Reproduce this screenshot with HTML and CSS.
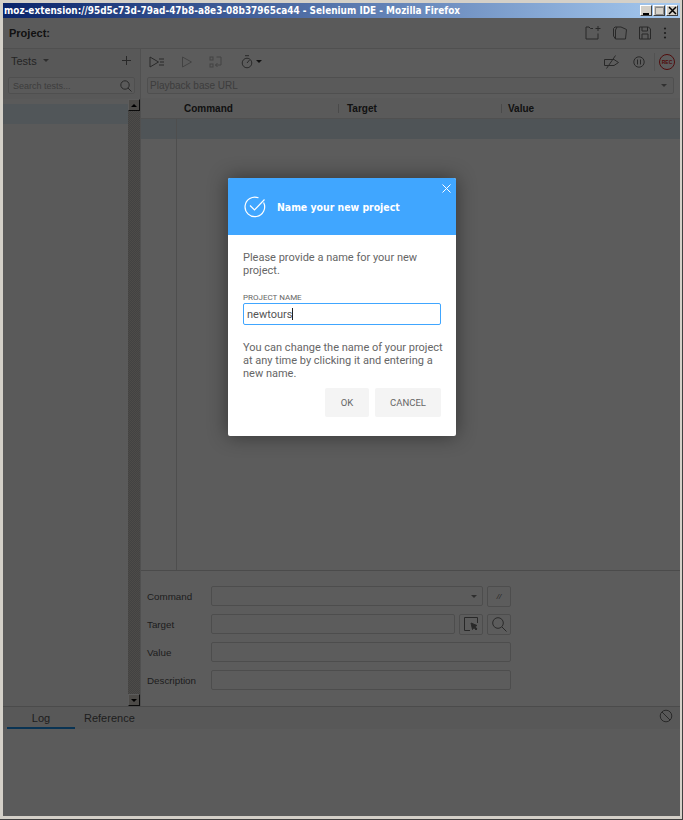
FILE: index.html
```html
<!DOCTYPE html>
<html lang="en">
<head>
<meta charset="utf-8">
<title>Selenium IDE</title>
<link rel="stylesheet" href="styles.css">
</head>
<body>
<div class="window">
  <div class="titlebar">
    <span class="title-text">moz-extension://95d5c73d-79ad-47b8-a8e3-08b37965ca44 - Selenium IDE - Mozilla Firefox</span>
    <div class="win-btns">
      <span class="win-btn"><svg width="9" height="9" viewBox="0 0 9 9"><rect x="1" y="7" width="6" height="2" fill="#000"/></svg></span>
      <span class="win-btn"><svg width="9" height="9" viewBox="0 0 9 9"><path d="M0.5 1.5h8v7h-8z" fill="none" stroke="#8a8a8a"/><path d="M0 1h9" stroke="#8a8a8a"/></svg></span>
      <span class="win-btn"><svg width="9" height="9" viewBox="0 0 9 9"><path d="M1 1l7 7M8 1l-7 7" stroke="#000" stroke-width="1.5"/></svg></span>
    </div>
  </div>
  <div class="app">
    <header class="project-bar">
      <span class="project-label">Project:</span>
      <div class="project-icons">
        <svg class="icon" width="16" height="14" viewBox="0 0 16 14"><path d="M8 2.500H5.500L4 1H1V13H13V7.500"/><path d="M13 0V5M10.500 2.500H15.500"/></svg>
        <svg class="icon" width="14" height="14" viewBox="0 0 14 14"><path d="M0.500 2.500L2 1H8L13.500 3.500L12.500 13H2.500L0.500 10z"/><path d="M4 1L2.500 4V13"/></svg>
        <svg class="icon" width="12" height="14" viewBox="0 0 12 14"><path d="M0.500 1H9.500L11.500 3V13H0.500z"/><path d="M3 1V5H8.500V1M3 13V8H9V13"/></svg>
        <svg class="icon-solid" width="4" height="14" viewBox="0 0 4 14"><circle cx="2" cy="2.500" r="1.100"/><circle cx="2" cy="7" r="1.100"/><circle cx="2" cy="11.500" r="1.100"/></svg>
      </div>
    </header>
    <div class="workspace">
      <aside class="sidebar">
        <div class="tests-head">
          <span class="tests-title">Tests</span>
          <span class="caret caret-soft"></span>
          <svg class="plus icon" width="11" height="11" viewBox="0 0 11 11"><path d="M5.500 1V10M1 5.500H10"/></svg>
        </div>
        <div class="search-box">
          <span class="search-ph">Search tests...</span>
          <svg class="icon" width="12" height="12" viewBox="0 0 12 12"><circle cx="5" cy="5" r="4.200"/><path d="M8 8l3.500 3.500"/></svg>
        </div>
        <div class="tests-list">
          <div class="tests-col">
            <div class="test-selected"></div>
          </div>
          <div class="scrollbar">
            <span class="sb-btn"><span class="sb-arrow-up"></span></span>
            <span class="sb-track"></span>
            <span class="sb-btn"><span class="sb-arrow-down"></span></span>
          </div>
        </div>
      </aside>
      <main class="editor">
        <div class="toolbar">
          <svg class="icon" width="16" height="12" viewBox="0 0 16 12"><path d="M1 1L9.500 6L1 11z"/><path d="M10 3H15M11 6H15M10 9H15"/></svg>
          <svg class="icon dim" width="12" height="12" viewBox="0 0 12 12"><path d="M1.500 1L10.500 6L1.500 11z"/></svg>
          <svg class="icon dim" width="13" height="12" viewBox="0 0 13 12"><rect x="1" y="1" width="3" height="3"/><rect x="1" y="8" width="3" height="3"/><path d="M7.500 1H12V9H6.500M8.500 7L6.500 9L8.500 11"/></svg>
          <span class="timer">
            <svg class="icon" width="12" height="14" viewBox="0 0 12 14"><circle cx="6" cy="8" r="4.800"/><path d="M4 0.700H8M6 8L8.500 5"/></svg>
            <span class="caret"></span>
          </span>
          <div class="toolbar-right">
            <svg class="icon" width="15" height="14" viewBox="0 0 15 14"><path d="M0.500 4.500H10L14.500 7.500L10 10.500H0.500z"/><path d="M2.500 13.500L11.500 0.500"/></svg>
            <svg class="icon" width="12" height="12" viewBox="0 0 12 12"><circle cx="6" cy="6" r="5.200"/><path d="M4.500 3.500V8.500M7.500 3.500V8.500"/></svg>
            <span class="tb-divider"></span>
            <span class="rec">REC</span>
          </div>
        </div>
        <div class="url-row">
          <div class="url-box">
            <span class="url-ph">Playback base URL</span>
            <span class="caret"></span>
          </div>
        </div>
        <div class="table-head">
          <span class="th th-cmd">Command</span>
          <span class="th th-target">Target</span>
          <span class="th th-value">Value</span>
        </div>
        <div class="table-body">
          <div class="row-selected"></div>
          <div class="gutter-line"></div>
        </div>
        <form class="command-form">
          <div class="form-row">
            <label class="form-label">Command</label>
            <div class="form-input form-select"><span class="caret caret-soft"></span></div>
            <span class="form-btn"><i class="comment">//</i></span>
          </div>
          <div class="form-row">
            <label class="form-label">Target</label>
            <div class="form-input"></div>
            <span class="form-btn"><svg class="icon" width="14" height="14" viewBox="0 0 14 14"><path d="M6 13.500H0.500V0.500H13.500V6"/><path class="fill" d="M7 6L13 8.500L11 9.500L13 12L12 13L10 10.500L8.500 12.500z"/></svg></span>
            <span class="form-btn"><svg class="icon" width="15" height="15" viewBox="0 0 15 15"><circle cx="6" cy="6" r="5.300"/><path d="M10 10L14.500 14.500"/></svg></span>
          </div>
          <div class="form-row">
            <label class="form-label">Value</label>
            <div class="form-input"></div>
          </div>
          <div class="form-row">
            <label class="form-label">Description</label>
            <div class="form-input"></div>
          </div>
        </form>
      </main>
    </div>
    <div class="log-tabs">
      <span class="tab tab-active">Log</span>
      <span class="tab tab-ref">Reference</span>
      <svg class="clear icon" width="14" height="14" viewBox="0 0 14 14"><circle cx="7" cy="7" r="5.800"/><path d="M3 3L11 11"/></svg>
    </div>
    <div class="log-body"></div>
    <div class="overlay"></div>
    <section class="dialog">
      <div class="dialog-head">
        <svg class="dialog-check" width="22" height="22" viewBox="0 0 22 22" fill="none" stroke="#fff" stroke-width="1.200"><path d="M19.600 6.500A9.800 9.800 0 1 1 14.500 1.800"/><path d="M6 9.500L10.500 14L20.500 3.500"/></svg>
        <h1 class="dialog-title">Name your new project</h1>
        <svg class="dialog-close" width="9" height="9" viewBox="0 0 9 9" stroke="#fff"><path d="M0.500 0.500L8.500 8.500M8.500 0.500L0.500 8.500"/></svg>
      </div>
      <div class="dialog-body">
        <p class="dialog-text">Please provide a name for your new project.</p>
        <label class="field-label">PROJECT NAME</label>
        <div class="field-input"><span>newtours</span><span class="text-cursor"></span></div>
        <p class="dialog-text dialog-hint">You can change the name of your project at any time by clicking it and entering a new name.</p>
        <div class="dialog-actions">
          <span class="dialog-btn btn-ok">OK</span>
          <span class="dialog-btn btn-cancel">CANCEL</span>
        </div>
      </div>
    </section>
  </div>
</div>
</body>
</html>
```
FILE: styles.css
```css
* { box-sizing: border-box; }
html, body { margin: 0; padding: 0; }
body {
  width: 683px;
  height: 820px;
  overflow: hidden;
  font-family: "Liberation Sans", Arial, sans-serif;
  background: #d4d0c8;
}
.window {
  width: 683px;
  height: 820px;
  padding: 3px 2px 3px 3px;
  display: flex;
  flex-direction: column;
  background: #d4d0c8;
  border-right: 1px solid #404040;
  border-bottom: 1px solid #404040;
}
.titlebar {
  height: 15px;
  flex: none;
  display: flex;
  align-items: center;
  justify-content: space-between;
  background: linear-gradient(90deg, #0a246a, #a6caf0);
  padding: 0 2px 0 1px;
}
.title-text {
  color: #fff;
  font-family: "DejaVu Sans", sans-serif;
  font-stretch: condensed;
  font-size: 9.930px;
  font-weight: 700;
  white-space: nowrap;
}
.win-btns { display: flex; gap: 1px; }
.win-btn {
  width: 12px;
  height: 11px;
  display: flex;
  align-items: center;
  justify-content: center;
  background: #d4d0c8;
  border: 1px solid;
  border-color: #fff #404040 #404040 #fff;
}
.app {
  position: relative;
  flex: 1;
  display: flex;
  flex-direction: column;
  background: #fff;
  overflow: hidden;
  min-height: 0;
}
.icon { fill: none; stroke: #707070; }
.icon .fill { fill: #707070; }
.icon-solid { fill: #505050; }
.project-bar {
  height: 31px;
  flex: none;
  display: flex;
  align-items: center;
  justify-content: space-between;
  padding: 0 13px 0 6px;
  background: #f8f8f8;
  border-bottom: 1px solid #dedede;
}
.project-label { font-size: 11px; font-weight: 700; color: #333; }
.project-icons { display: flex; align-items: center; gap: 12px; }
.workspace { flex: 1; display: flex; min-height: 0; }
.sidebar {
  width: 138px;
  flex: none;
  display: flex;
  flex-direction: column;
  background: #f4f4f4;
  border-right: 1px solid #dedede;
}
.tests-head {
  height: 25px;
  flex: none;
  display: flex;
  align-items: center;
  gap: 6px;
  padding: 0 8px 2px 8px;
  background: #f4f4f4;
}
.tests-title { font-size: 11px; color: #666; }
.plus { margin-left: auto; }
.caret {
  display: inline-block;
  width: 0;
  height: 0;
  border-left: 3px solid transparent;
  border-right: 3px solid transparent;
  border-top: 3px solid #333;
}
.caret-soft { border-top-color: #808080; }
.search-box {
  margin: 3px 5px 5px 5px;
  height: 17px;
  flex: none;
  display: flex;
  align-items: center;
  justify-content: space-between;
  padding: 0 2px 0 4px;
  background: #f8f8f8;
  border: 1px solid #dcdcdc;
  border-radius: 2px;
}
.search-ph { font-size: 9px; color: #aaa; }
.tests-list { flex: 1; display: flex; min-height: 0; background: #f8f8f8; }
.tests-col { flex: 1; }
.test-selected { height: 20px; margin-top: 5px; background: #e1edf7; }
.scrollbar { width: 12px; display: flex; flex-direction: column; }
.sb-btn {
  width: 12px;
  height: 12px;
  flex: none;
  display: flex;
  align-items: center;
  justify-content: center;
  background: #d4d0c8;
  border: 1px solid;
  border-color: #fff #202020 #202020 #fff;
}
.sb-track {
  flex: 1;
  background: repeating-conic-gradient(#d4d0c8 0 25%, #b8b8b8 0 50%) 0 0 / 2px 2px;
}
.sb-arrow-up { width: 0; height: 0; border: 3px solid transparent; border-top: 0; border-bottom: 3px solid #000; }
.sb-arrow-down { width: 0; height: 0; border: 3px solid transparent; border-bottom: 0; border-top: 3px solid #000; }
.editor {
  flex: 1;
  min-width: 0;
  display: flex;
  flex-direction: column;
  background: #fff;
}
.toolbar {
  height: 25px;
  flex: none;
  display: flex;
  align-items: center;
  gap: 16px;
  padding: 0 5px 0 8px;
}
.dim { opacity: 0.5; }
.timer { display: inline-flex; align-items: center; gap: 3px; margin-left: 3px; }
.toolbar-right { margin-left: auto; display: flex; align-items: center; gap: 14px; }
.tb-divider { width: 1px; height: 18px; background: #e2e2e2; margin-right: -10px; margin-left: -5px; }
.rec {
  width: 16px;
  height: 16px;
  border-radius: 50%;
  border: 1px solid #d22;
  color: #d22;
  font-size: 5px;
  font-weight: 700;
  display: flex;
  align-items: center;
  justify-content: center;
}
.url-row { padding: 3px 6px 4px 6px; flex: none; }
.url-box {
  height: 17px;
  display: flex;
  align-items: center;
  justify-content: space-between;
  padding: 0 6px 0 2px;
  background: #f8f8f8;
  border: 1px solid #dcdcdc;
  border-radius: 2px;
}
.url-ph { font-size: 10px; color: #aaa; }
.url-box .caret { border-top-color: #888; }
.table-head {
  height: 21px;
  flex: none;
  display: flex;
  align-items: center;
  background: #f8f8f8;
  border-bottom: 1px solid #dedede;
  font-size: 10px;
  font-weight: 700;
  color: #333;
}
.th { display: block; }
.th-cmd { width: 198px; padding-left: 43px; border-right: 1px solid #ccc; line-height: 9px; }
.th-target { width: 163px; padding-left: 8px; border-right: 1px solid #ccc; line-height: 9px; }
.th-value { padding-left: 6px; }
.table-body { position: relative; flex: 1; background: #fff; border-bottom: 1px solid #cfcfcf; min-height: 0; }
.row-selected { height: 20px; background: #dbe8f2; }
.gutter-line { position: absolute; left: 35px; top: 0; bottom: 0; width: 1px; background: #d9d9d9; }
.command-form {
  height: 135px;
  flex: none;
  padding: 15px 0 0 6px;
  display: flex;
  flex-direction: column;
  gap: 8px;
}
.form-row { display: flex; align-items: center; height: 20px; width: 364px; gap: 4px; }
.form-label { width: 64px; flex: none; margin-right: -4px; font-size: 9.800px; color: #555; }
.form-input {
  flex: 1;
  height: 20px;
  background: #fff;
  border: 1px solid #d5d5d5;
  border-radius: 2px;
}
.form-select { display: flex; align-items: center; justify-content: flex-end; padding-right: 5px; }
.form-btn {
  width: 24px;
  height: 21px;
  flex: none;
  display: flex;
  align-items: center;
  justify-content: center;
  background: #fff;
  border: 1px solid #d5d5d5;
  border-radius: 2px;
}
.comment { font-size: 8px; color: #666; }
.log-tabs {
  height: 23px;
  flex: none;
  display: flex;
  align-items: flex-end;
  position: relative;
  background: #f4f4f4;
  border-top: 1px solid #cfcfcf;
  font-size: 11px;
  color: #555;
  padding-left: 4px;
}
.tab { height: 21px; display: flex; align-items: center; justify-content: center; }
.tab-active { width: 68px; border-bottom: 2px solid #1a8ee6; }
.tab-ref { margin-left: 9px; padding-bottom: 2px; }
.clear { position: absolute; right: 7px; top: 2px; }
.log-body { height: 87px; flex: none; background: #fbfbfb; }
.overlay { position: absolute; inset: 0; background: rgba(0, 0, 0, 0.64); }
.dialog {
  position: absolute;
  left: 225px;
  top: 160px;
  width: 228px;
  height: 258px;
  background: #fff;
  border-radius: 2px;
  box-shadow: 0 0 20px rgba(0, 0, 0, 0.45);
  display: flex;
  flex-direction: column;
}
.dialog-head {
  position: relative;
  height: 57px;
  flex: none;
  display: flex;
  align-items: center;
  padding: 0 0 0 16px;
  gap: 11px;
  background: #40a6ff;
  border-radius: 2px 2px 0 0;
}
.dialog-title {
  margin: 0;
  color: #fff;
  font-family: "DejaVu Sans", sans-serif;
  font-stretch: condensed;
  font-size: 10.400px;
  font-weight: 700;
}
.dialog-check { flex: none; }
.dialog-close { position: absolute; right: 5px; top: 6px; }
.dialog-body { padding: 16px 15px 0 15px; flex: 1; }
.dialog-text {
  margin: 0;
  font-family: Roboto, "Liberation Sans", sans-serif;
  font-size: 11px;
  line-height: 13px;
  color: #666;
}
.field-label {
  display: block;
  margin-top: 16px;
  font-family: Roboto, "Liberation Sans", sans-serif;
  font-size: 8px;
  line-height: 10px;
  color: #666;
}
.field-input {
  height: 22px;
  display: flex;
  align-items: center;
  padding: 0 3px;
  font-family: Roboto, "Liberation Sans", sans-serif;
  font-size: 11px;
  color: #555;
  border: 1px solid #40a6ff;
  border-radius: 2px;
}
.text-cursor { width: 1px; height: 12px; background: #222; }
.dialog-hint { margin-top: 16px; margin-right: -4px; }
.dialog-actions { display: flex; justify-content: flex-end; gap: 6px; margin-top: 8px; }
.dialog-btn {
  height: 29px;
  display: flex;
  align-items: center;
  justify-content: center;
  background: #f4f4f4;
  border-radius: 2px;
  font-family: Roboto, "Liberation Sans", sans-serif;
  font-size: 9.500px;
  color: #666;
}
.btn-ok { width: 44px; }
.btn-cancel { width: 66px; }
```
